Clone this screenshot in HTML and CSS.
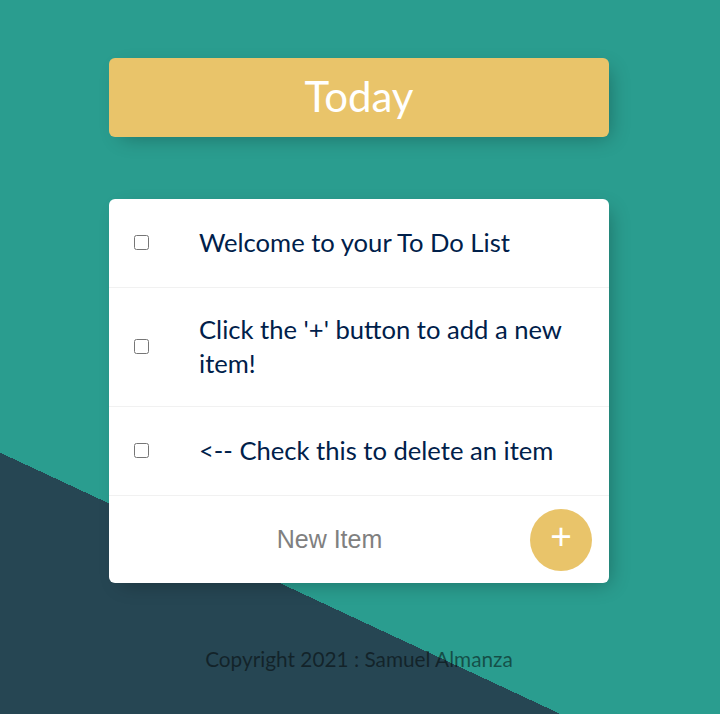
FILE: index.html
```html
<!DOCTYPE html>
<html lang="en">
<head>
<meta charset="utf-8">
<title>To Do List</title>
<link rel="stylesheet" href="styles.css">
</head>
<body>
  <main class="page">
    <div class="box heading">
      <h1 class="heading-title">Today</h1>
    </div>
    <div class="box list">
      <div class="item">
        <input class="check" type="checkbox">
        <p class="item-text">Welcome to your To Do List</p>
      </div>
      <div class="item">
        <input class="check" type="checkbox">
        <p class="item-text">Click the '+' button to add a new item!</p>
      </div>
      <div class="item">
        <input class="check" type="checkbox">
        <p class="item-text">&lt;-- Check this to delete an item</p>
      </div>
      <form class="item new-form" onsubmit="return false">
        <input class="new-input" type="text" name="newItem" placeholder="New Item" autocomplete="off">
        <button class="add-btn" type="submit">+</button>
      </form>
    </div>
    <footer class="footer">Copyright 2021 : Samuel Almanza</footer>
  </main>
</body>
</html>
```

FILE: styles.css
```css
html {
  height: 100%;
  background-color: #2a9d8f;
  background-image: linear-gradient(25deg, #264653 24.9%, #2a9d8f 24.9%);
}

body {
  margin: 0;
  height: 100%;
  overflow: hidden;
  font-family: "Lato", "Noto Sans", sans-serif;
}

.page {
  display: flex;
  flex-direction: column;
  align-items: center;
  padding-top: 58px;
  padding-right: 2px;
}

.box {
  width: 500px;
  background: #ffffff;
  border-radius: 6px;
  box-shadow: 6px 6px 19px -6px rgba(0, 0, 0, 0.3);
}

.heading {
  height: 79px;
  background-color: #e9c46a;
  display: flex;
  align-items: center;
  justify-content: center;
}

.heading-title {
  margin: 0 0 4px;
  color: #ffffff;
  font-family: "Lato", sans-serif;
  font-size: 42px;
  font-weight: 400;
  line-height: 48px;
}

.list {
  margin-top: 62px;
}

.item {
  min-height: 88px;
  display: flex;
  align-items: center;
  border-bottom: 1px solid #f1f1f1;
}

.check {
  width: 15px;
  height: 15px;
  margin: 0 25px 2px;
  flex: none;
}

.item-text {
  margin: 0 0 2px;
  padding: 24px 25px;
  font-size: 25.6px;
  line-height: 34px;
  font-weight: 400;
  color: #00204a;
}

.new-form {
  border-bottom: 0;
  min-height: 87px;
  margin-left: 25px;
  gap: 5px;
}

.new-input {
  width: 391px;
  height: 75px;
  padding: 0;
  border: none;
  background: transparent;
  text-align: center;
  font-family: "Liberation Sans", Arial, sans-serif;
  font-size: 25px;
  color: #00204a;
}

.new-input:focus {
  outline: none;
}

.new-input::placeholder {
  color: grey;
  opacity: 1;
}

.add-btn {
  width: 62px;
  height: 62px;
  border-radius: 50%;
  border: 0;
  padding: 0 0 7px;
  background-color: #e9c46a;
  color: #ffffff;
  font-family: "Liberation Sans", Arial, sans-serif;
  font-size: 37px;
  line-height: 1;
}

.footer {
  margin-top: 62px;
  line-height: 28px;
  font-size: 20.8px;
  color: rgba(0, 0, 0, 0.5);
  text-align: center;
}
```
